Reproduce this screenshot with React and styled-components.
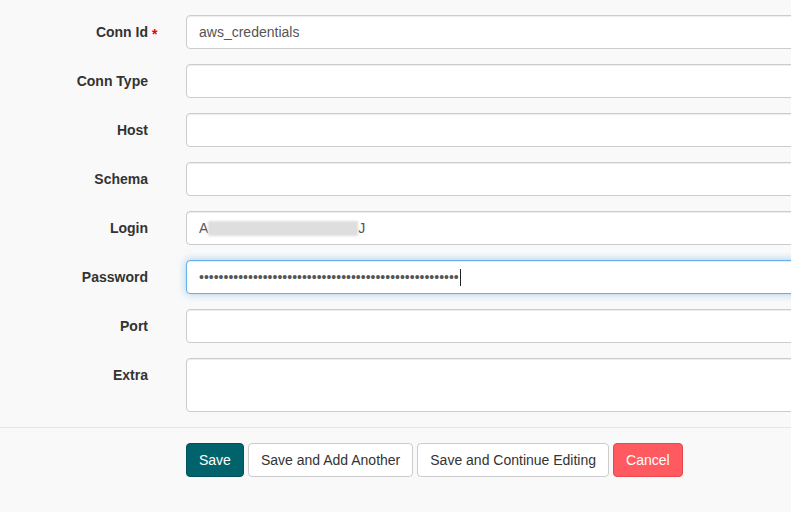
import styled, { createGlobalStyle, css } from 'styled-components';

const GlobalStyle = createGlobalStyle`
  html, body {
    margin: 0;
    padding: 0;
    background: #f9f9f9;
    overflow: hidden;
  }
  body {
    font-family: "Liberation Sans", Arial, sans-serif;
    font-size: 14px;
    color: #333;
  }
`;

const fields = [
  { label: 'Conn Id', required: true, value: 'aws_credentials' },
  { label: 'Conn Type' },
  { label: 'Host' },
  { label: 'Schema' },
  { label: 'Login', kind: 'login' },
  { label: 'Password', kind: 'password' },
  { label: 'Port' },
  { label: 'Extra', kind: 'textarea' },
];

const App = () => {
  return (
    <>
      <GlobalStyle />
      <Form>
        {fields.map((f) => (
          <Row key={f.label}>
            <Label>
              <LabelText>
                {f.label}
                {f.required && <Required>*</Required>}
              </LabelText>
            </Label>
            {f.kind === 'textarea' && <TextArea readOnly />}
            {f.kind === 'login' && (
              <FakeInput>
                A<Blurred />J
              </FakeInput>
            )}
            {f.kind === 'password' && (
              <FakeInput $focused>
                <Dots>{'•'.repeat(53)}</Dots>
                <Caret />
              </FakeInput>
            )}
            {!f.kind && <Input readOnly value={f.value || ''} />}
          </Row>
        ))}
      </Form>
      <Actions>
        <Button $variant="primary">Save</Button>
        <Button>Save and Add Another</Button>
        <Button>Save and Continue Editing</Button>
        <Button $variant="danger">Cancel</Button>
      </Actions>
    </>
  );
};

export default App;

const Form = styled.div`
  padding-top: 15px;
  display: flex;
  flex-direction: column;
  gap: 15px;
  padding-bottom: 15px;
  border-bottom: 1px solid #e5e5e5;
`;

const Row = styled.div`
  display: flex;
  align-items: flex-start;
  gap: 38px;
`;

const Label = styled.label`
  flex: 0 0 148px;
  text-align: right;
  font-weight: bold;
  padding-top: 7px;
  line-height: 20px;
  color: #333;
`;

const LabelText = styled.span`
  position: relative;
`;

const Required = styled.span`
  position: absolute;
  left: 100%;
  top: 0;
  margin-left: 4px;
  color: #e00;
`;

const fieldBase = css`
  box-sizing: border-box;
  flex: 0 0 640px;
  width: 640px;
  height: 34px;
  padding: 6px 12px;
  font-family: "Liberation Sans", Arial, sans-serif;
  font-size: 14px;
  line-height: 20px;
  color: #555;
  background: #fff;
  border: 1px solid #ccc;
  border-radius: 4px;
  box-shadow: inset 0 1px 1px rgba(0, 0, 0, 0.075);
  outline: none;
`;

const Input = styled.input`
  ${fieldBase}
`;

const TextArea = styled.textarea`
  ${fieldBase}
  height: 54px;
  resize: none;
`;

const FakeInput = styled.div`
  ${fieldBase}
  display: flex;
  align-items: center;
  white-space: nowrap;
  ${(p) =>
    p.$focused &&
    css`
      border-color: #66afe9;
      box-shadow: inset 0 1px 1px rgba(0, 0, 0, 0.075),
        0 0 8px rgba(102, 175, 233, 0.6);
    `}
`;

const Blurred = styled.span`
  display: inline-block;
  width: 150px;
  height: 15px;
  background: #dedede;
  filter: blur(1.2px);
`;

const Dots = styled.span`
  color: #555;
`;

const Caret = styled.span`
  display: inline-block;
  width: 1px;
  height: 17px;
  background: #222;
  margin-left: 1px;
`;

const Actions = styled.div`
  display: flex;
  gap: 4px;
  padding: 15px 0 0 186px;
`;

const variants = {
  default: css`
    background: #fff;
    color: #333;
    border-color: #ccc;
  `,
  primary: css`
    background: #00636b;
    color: #fff;
    border-color: #00525a;
  `,
  danger: css`
    background: #ff5a5f;
    color: #fff;
    border-color: #e9474d;
  `,
};

const Button = styled.button`
  height: 34px;
  padding: 6px 12px;
  font-family: "Liberation Sans", Arial, sans-serif;
  font-size: 14px;
  line-height: 20px;
  border: 1px solid;
  border-radius: 4px;
  cursor: pointer;
  ${(p) => variants[p.$variant || 'default']}
`;
